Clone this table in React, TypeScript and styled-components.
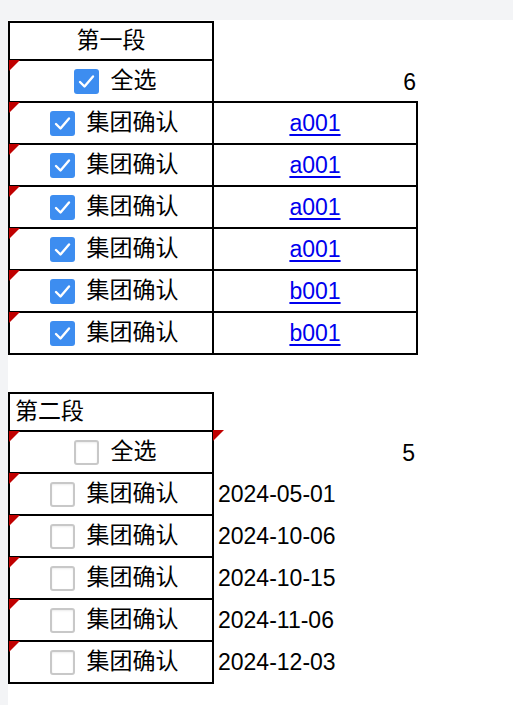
import React from 'react';
import styled, { createGlobalStyle } from 'styled-components';

const GlobalStyle = createGlobalStyle`
  html, body { margin: 0; padding: 0; background: #f3f4f6; }
  body {
    font-family: "Liberation Sans", "Noto Sans CJK SC", sans-serif;
    color: #000;
  }
`;

const Page = styled.div`
  margin: 20px 0 0 8px;
  background: #fff;
  min-height: 685px;
  padding-top: 1px;
`;

const Sheet = styled.table<{ $gap?: number }>`
  border-collapse: collapse;
  table-layout: fixed;
  width: 410px;
  font-size: 23px;
  margin-top: ${(p) => p.$gap ?? 0}px;
`;

const Col = styled.col`
  width: 204px;
`;

const Row = styled.tr<{ $h: number }>`
  height: ${(p) => p.$h}px;
`;

const Cell = styled.td<{
  $border?: boolean;
  $align?: 'left' | 'center' | 'right';
  $pl?: number;
  $pr?: number;
  $pt?: number;
}>`
  position: relative;
  padding: ${(p) => p.$pt ?? 0}px ${(p) => p.$pr ?? 0}px 0 ${(p) => p.$pl ?? 0}px;
  border: ${(p) => (p.$border ? '2px solid #000' : 'none')};
  text-align: ${(p) => p.$align ?? 'left'};
  vertical-align: middle;
  white-space: nowrap;
  line-height: 1.2;
`;

const Flag = styled.span`
  position: absolute;
  top: -1px;
  left: -1px;
  width: 0;
  height: 0;
  border-top: 11px solid #c00000;
  border-right: 11px solid transparent;
`;

const CheckLine = styled.div<{ $offset?: number }>`
  display: flex;
  align-items: center;
  justify-content: center;
  gap: 12px;
  padding-left: ${(p) => p.$offset ?? 6}px;
`;

const Box = styled.span<{ $checked: boolean }>`
  display: inline-flex;
  align-items: center;
  justify-content: center;
  box-sizing: border-box;
  width: 25px;
  height: 25px;
  border-radius: 3px;
  background: ${(p) => (p.$checked ? '#3d8df0' : '#fff')};
  border: ${(p) => (p.$checked ? 'none' : '2px solid #c8c8c8')};
  box-shadow: ${(p) => (p.$checked ? 'none' : 'inset 0 1px 2px rgba(0,0,0,0.08)')};
`;

const Link = styled.a`
  color: #0000ee;
  text-decoration: underline;
  text-underline-offset: 3px;
`;

const Check = ({ checked }: { checked: boolean }) => (
  <Box $checked={checked}>
    {checked && (
      <svg width="25" height="25" viewBox="0 0 25 25">
        <path d="M6 13 L10.5 17.5 L19 7.5" fill="none" stroke="#fff" strokeWidth="2.4" strokeLinecap="round" strokeLinejoin="round" />
      </svg>
    )}
  </Box>
);

const Cols = () => (
  <colgroup>
    <Col />
    <Col />
  </colgroup>
);

const first = ['a001', 'a001', 'a001', 'a001', 'b001', 'b001'];
const second = ['2024-05-01', '2024-10-06', '2024-10-15', '2024-11-06', '2024-12-03'];

export default function App() {
  return (
    <>
      <GlobalStyle />
      <Page>
        <Sheet>
          <Cols />
          <tbody>
            <Row $h={38}>
              <Cell $border $align="center">第一段</Cell>
              <Cell />
            </Row>
            <Row $h={42}>
              <Cell $border>
                <Flag />
                <CheckLine $offset={8}>
                  <Check checked />
                  <span>全选</span>
                </CheckLine>
              </Cell>
              <Cell $align="right" $pr={1} $pt={4}>6</Cell>
            </Row>
            {first.map((code, i) => (
              <Row $h={42} key={i}>
                <Cell $border>
                  <Flag />
                  <CheckLine>
                    <Check checked />
                    <span>集团确认</span>
                  </CheckLine>
                </Cell>
                <Cell $border $align="center" $pt={2}>
                  <Link href="#">{code}</Link>
                </Cell>
              </Row>
            ))}
          </tbody>
        </Sheet>
        <Sheet $gap={37}>
          <Cols />
          <tbody>
            <Row $h={38}>
              <Cell $border $pl={5}>第二段</Cell>
              <Cell />
            </Row>
            <Row $h={42}>
              <Cell $border>
                <Flag />
                <CheckLine $offset={8}>
                  <Check checked={false} />
                  <span>全选</span>
                </CheckLine>
              </Cell>
              <Cell $align="right" $pr={1} $pt={4}>
                <Flag />
                5
              </Cell>
            </Row>
            {second.map((d, i) => (
              <Row $h={42} key={i}>
                <Cell $border>
                  <Flag />
                  <CheckLine>
                    <Check checked={false} />
                    <span>集团确认</span>
                  </CheckLine>
                </Cell>
                <Cell $pl={4} $pt={2}>{d}</Cell>
              </Row>
            ))}
          </tbody>
        </Sheet>
      </Page>
    </>
  );
}
